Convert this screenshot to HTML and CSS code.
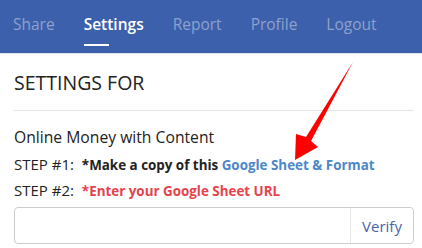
FILE: index.html
```html
<!DOCTYPE html>
<html lang="en">
<head>
  <meta charset="UTF-8" />
  <title>Settings</title>
  <link rel="stylesheet" href="styles.css">
</head>
<body>

<nav class="topnav">
  <a href="#">Share</a>
  <a href="#" class="active">Settings</a>
  <a href="#">Report</a>
  <a href="#">Profile</a>
  <a href="#">Logout</a>
</nav>

<div class="panel">
  <h3 class="title">SETTINGS FOR</h3>
  <div class="body">
    <p class="name">Online Money with Content</p>
    <p class="step">STEP #1: <b>*Make a copy of this <a href="#">Google Sheet &amp; Format</a></b></p>
    <p class="step">STEP #2: <b class="warn">*Enter your Google Sheet URL</b></p>
    <div class="url-group">
      <input type="text" class="url">
      <button class="verify">Verify</button>
    </div>
  </div>
</div>

<svg class="arrow" width="422" height="248" viewBox="0 0 422 248">
  <polygon points="353,62 306,137 296,134 295,160 318,147 311,141" fill="#ff0000"/>
</svg>

</body>
</html>
```

FILE: styles.css
```css
body {
  margin: 0;
  font-family: "Open Sans", sans-serif;
  color: #222;
  background: #fff;
}
.topnav {
  display: flex;
  gap: 29px;
  height: 53px;
  padding: 0 13px;
  background: #3c60ac;
  border-bottom: 1px solid #dde3ef;
}
.topnav a {
  position: relative;
  line-height: 49px;
  font-size: 15.5px;
  color: #8ea0cc;
  text-decoration: none;
}
.topnav a.active {
  color: #fff;
  font-weight: 600;
}
.topnav a.active::after {
  content: "";
  position: absolute;
  left: 0;
  bottom: 7px;
  width: 25px;
  height: 2px;
  background: #fff;
}
.panel {
  padding: 0 8px 0 14px;
}
.title {
  margin: 0;
  padding: 15px 0 14px;
  font-size: 19.5px;
  font-weight: 400;
  border-bottom: 1px solid #e5e5e5;
}
.body {
  padding-top: 15px;
}
.body p {
  margin: 0;
  font-size: 15px;
}
.body p.name {
  margin-bottom: 4px;
  line-height: 22px;
  font-size: 15.7px;
}
.step {
  line-height: 25px;
}
.step b {
  font-size: 13.4px;
  margin-left: 4px;
}
.step a {
  color: #4d87c7;
  text-decoration: none;
}
.warn {
  color: #e5434c;
}
.url-group {
  display: flex;
  margin-top: 3px;
  height: 35px;
  border: 1px solid #ccc;
  border-radius: 4px;
}
.url {
  flex: 1;
  border: none;
  outline: none;
  background: transparent;
}
.verify {
  width: 63px;
  border: none;
  border-left: 1px solid #e6e6e6;
  background: #fff;
  border-radius: 0 4px 4px 0;
  font-family: inherit;
  font-size: 15px;
  color: #4a5fae;
}
.arrow {
  position: absolute;
  left: 0;
  top: 0;
  pointer-events: none;
}
```
